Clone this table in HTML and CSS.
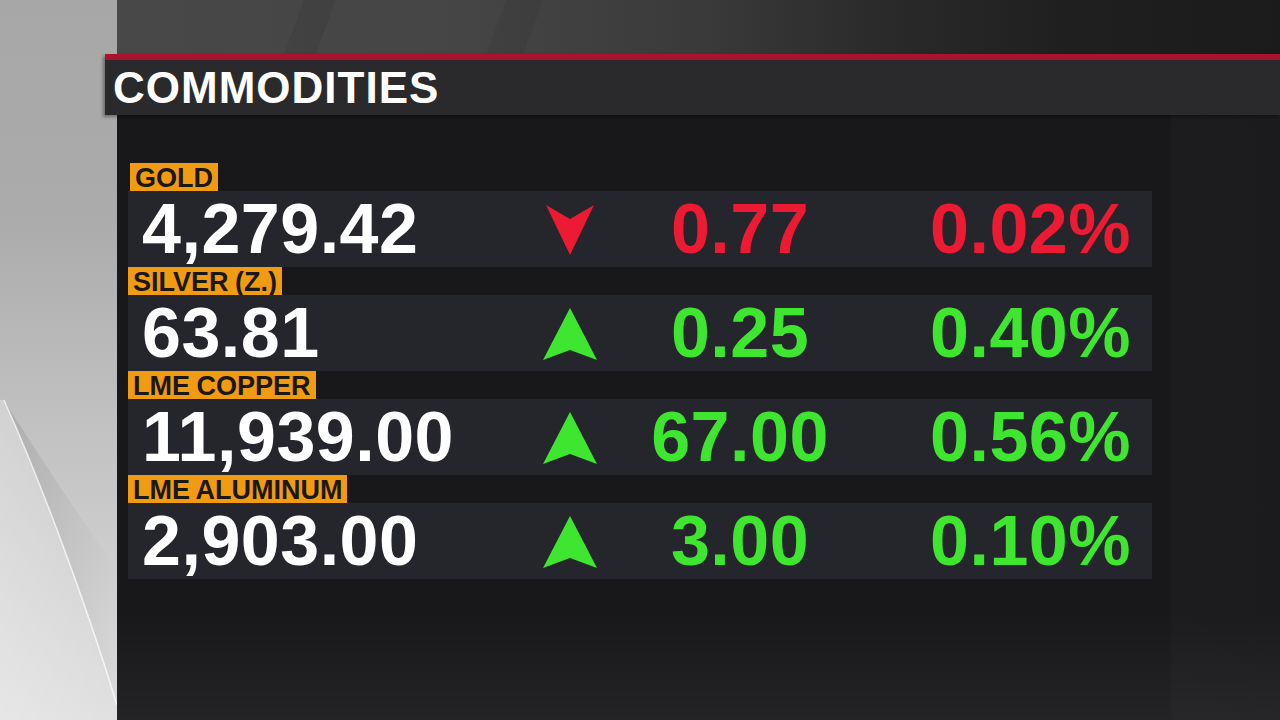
FILE: index.html
```html
<!DOCTYPE html>
<html lang="en">
<head>
<meta charset="utf-8">
<title>Commodities</title>
<link rel="stylesheet" href="styles.css">
</head>
<body>
<div class="stage">
  <div class="side">
    <svg class="side-art" viewBox="0 0 117 720" preserveAspectRatio="none" aria-hidden="true">
      <defs>
        <linearGradient id="sheet" x1="0" y1="0" x2="1" y2="0">
          <stop offset="0" stop-color="#ffffff" stop-opacity="0.30"/>
          <stop offset="1" stop-color="#ffffff" stop-opacity="0.12"/>
        </linearGradient>
        <linearGradient id="shade" x1="0" y1="0" x2="1" y2="0">
          <stop offset="0" stop-color="#000000" stop-opacity="0.10"/>
          <stop offset="1" stop-color="#000000" stop-opacity="0"/>
        </linearGradient>
      </defs>
      <path d="M4,400 C40,480 85,600 117,705 L117,720 L0,720 L0,400 Z" fill="url(#sheet)"/>
      <path d="M4,400 C40,480 85,600 117,705 L117,570 C75,510 35,450 4,400 Z" fill="url(#shade)"/>
      <path d="M4,400 C40,480 85,600 117,705" fill="none" stroke="#ffffff" stroke-opacity="0.7" stroke-width="1.5"/>
    </svg>
  </div>
  <div class="main">
    <div class="topband"></div>
    <header class="titlebar">
      <h1 class="title">COMMODITIES</h1>
    </header>
    <section class="panel">
      <div class="list">
        <div class="item">
          <div class="label label-first">GOLD</div>
          <div class="row down">
            <span class="value">4,279.42</span>
            <svg class="arrow" viewBox="0 0 54 52" aria-hidden="true"><polygon points="3,1 27,15 51,1 27,51"/></svg>
            <span class="chg">0.77</span>
            <span class="pct">0.02%</span>
          </div>
        </div>
        <div class="item">
          <div class="label">SILVER (Z.)</div>
          <div class="row up">
            <span class="value">63.81</span>
            <svg class="arrow" viewBox="0 0 54 52" aria-hidden="true"><polygon points="27,0 54,52 27,42 0,52"/></svg>
            <span class="chg">0.25</span>
            <span class="pct">0.40%</span>
          </div>
        </div>
        <div class="item">
          <div class="label">LME COPPER</div>
          <div class="row up">
            <span class="value">11,939.00</span>
            <svg class="arrow" viewBox="0 0 54 52" aria-hidden="true"><polygon points="27,0 54,52 27,42 0,52"/></svg>
            <span class="chg">67.00</span>
            <span class="pct">0.56%</span>
          </div>
        </div>
        <div class="item">
          <div class="label">LME ALUMINUM</div>
          <div class="row up">
            <span class="value">2,903.00</span>
            <svg class="arrow" viewBox="0 0 54 52" aria-hidden="true"><polygon points="27,0 54,52 27,42 0,52"/></svg>
            <span class="chg">3.00</span>
            <span class="pct">0.10%</span>
          </div>
        </div>
      </div>
    </section>
  </div>
</div>
</body>
</html>
```
FILE: styles.css
```css
* { box-sizing: border-box; }

html, body {
  margin: 0;
  padding: 0;
  width: 1280px;
  height: 720px;
  overflow: hidden;
  background: #18181b;
  font-family: "Liberation Sans", Arial, sans-serif;
}

.stage {
  display: flex;
  width: 1280px;
  height: 720px;
}

.side {
  width: 117px;
  flex: none;
  background: linear-gradient(180deg, #a7a7a7 0%, #ababab 30%, #c2c2c2 60%, #dcdcdc 100%);
}

.side-art {
  display: block;
  width: 117px;
  height: 720px;
}

.main {
  flex: 1;
  display: flex;
  flex-direction: column;
  min-width: 0;
}

.topband {
  height: 54px;
  flex: none;
  background:
    linear-gradient(110deg, transparent 0 175px, rgba(0,0,0,0.07) 176px 205px, transparent 206px 365px, rgba(0,0,0,0.06) 366px 400px, transparent 401px),
    linear-gradient(90deg, #484848 0%, #454545 30%, #3a3a3a 50%, #2a2a2a 66%, #1f1f1f 82%, #1b1b1b 100%);
}

.titlebar {
  flex: none;
  height: 61px;
  margin-left: -12px;
  border-top: 6px solid #a8142c;
  background: #2a2a2d;
  box-shadow: -2px 2px 3px rgba(0,0,0,0.35);
  position: relative;
  z-index: 1;
}

.title {
  margin: 0;
  padding-left: 8px;
  font-size: 44px;
  line-height: 55px;
  font-weight: 700;
  letter-spacing: 1px;
  color: #ffffff;
}

.panel {
  flex: 1;
  background:
    linear-gradient(180deg, rgba(255,255,255,0) 0%, rgba(255,255,255,0) 82%, rgba(255,255,255,0.05) 100%),
    linear-gradient(90deg, #18181b 0%, #18181b 1052px, #1c1c1f 1056px, #1b1b1d 100%);
  padding: 48px 0 0 11px;
}

.list {
  width: 1024px;
  display: flex;
  flex-direction: column;
}

.item {
  display: flex;
  flex-direction: column;
  align-items: flex-start;
}

.label {
  height: 28px;
  padding: 3px 5px 0 5px;
  background: #f09b12;
  color: #1b1714;
  font-size: 27px;
  line-height: 25px;
  font-weight: 700;
  letter-spacing: 0;
  word-spacing: -1px;
  white-space: nowrap;
}

.label-first {
  margin-left: 2px;
}

.row {
  align-self: stretch;
  height: 76px;
  display: grid;
  grid-template-columns: 401px 54px 286px 1fr;
  align-items: center;
  padding: 0 21px 0 14px;
  background: #25262b;
  font-weight: 700;
  font-size: 70px;
  line-height: 76px;
  white-space: nowrap;
}

.value {
  color: #ffffff;
  letter-spacing: 0.5px;
}

.arrow {
  width: 54px;
  height: 52px;
  display: block;
  margin-top: 2px;
}

.chg {
  text-align: center;
  letter-spacing: 0.5px;
}

.pct {
  text-align: right;
  letter-spacing: 0.5px;
}

.down .chg, .down .pct { color: #ec1a33; }
.down .arrow polygon { fill: #ec1a33; }

.up .chg, .up .pct { color: #3ee630; }
.up .arrow polygon { fill: #3ee630; }
```
